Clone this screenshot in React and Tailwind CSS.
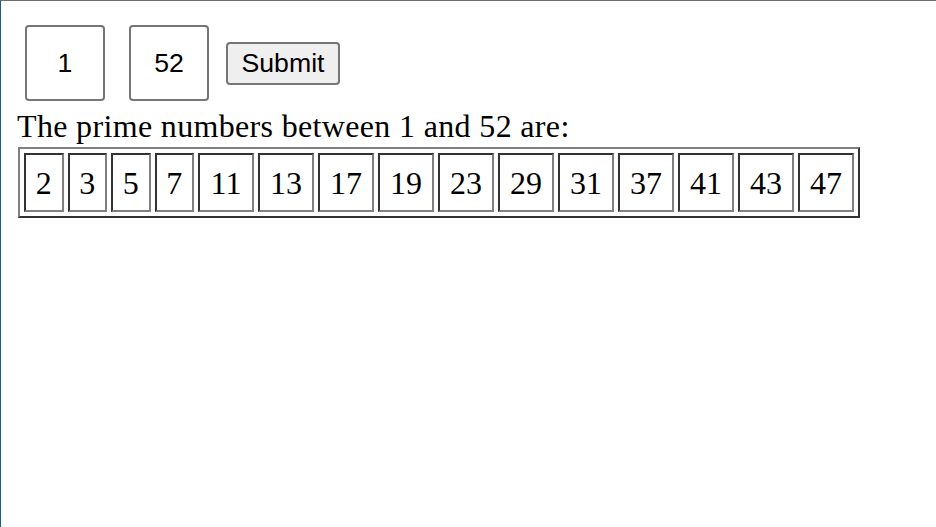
import React from "react";

const primes = [2, 3, 5, 7, 11, 13, 17, 19, 23, 29, 31, 37, 41, 43, 47];

export default function App() {
  return (
    <div className="w-[936px] h-[527px] bg-white border-t border-t-[#6f6f6f] border-l border-l-[#1c5e79] overflow-hidden">
      <div className="pl-[16px] pt-[24px]">
        <div className="flex items-center ml-[8px]">
          <div className="w-[80px] h-[76px] border-2 border-[#767676] rounded-[4px] flex items-center justify-center text-black text-[26.67px] font-['Liberation_Sans',Arial,sans-serif]">
            1
          </div>
          <div className="ml-[24px] w-[80px] h-[76px] border-2 border-[#767676] rounded-[4px] flex items-center justify-center text-black text-[26.67px] font-['Liberation_Sans',Arial,sans-serif]">
            52
          </div>
          <button className="ml-[17px] w-[114px] h-[43px] bg-[#efefef] border-2 border-[#767676] rounded-[4px] flex items-center justify-center text-black text-[26.67px] font-['Liberation_Sans',Arial,sans-serif]">
            Submit
          </button>
        </div>
        <div className="mt-[7px] leading-[36px] text-[32px] tracking-[0.34px] text-black font-['Liberation_Serif','Times_New_Roman',serif]">
          The prime numbers between 1 and 52 are:
        </div>
        <div className="mt-[3px] ml-[1px] inline-flex gap-[4px] p-[4px] border-2 border-t-[#808080] border-l-[#808080] border-b-[#333333] border-r-[#333333]">
          {primes.map((p) => (
            <div
              key={p}
              className={
                (p < 10 ? "w-[39.5px] " : "w-[56px] ") +
                "h-[59px] border-2 border-t-[#333333] border-l-[#333333] border-b-[#808080] border-r-[#808080] flex items-center justify-center text-[32px] leading-[36px] text-black font-['Liberation_Serif','Times_New_Roman',serif]"
              }
            >
              {p}
            </div>
          ))}
        </div>
      </div>
    </div>
  );
}
